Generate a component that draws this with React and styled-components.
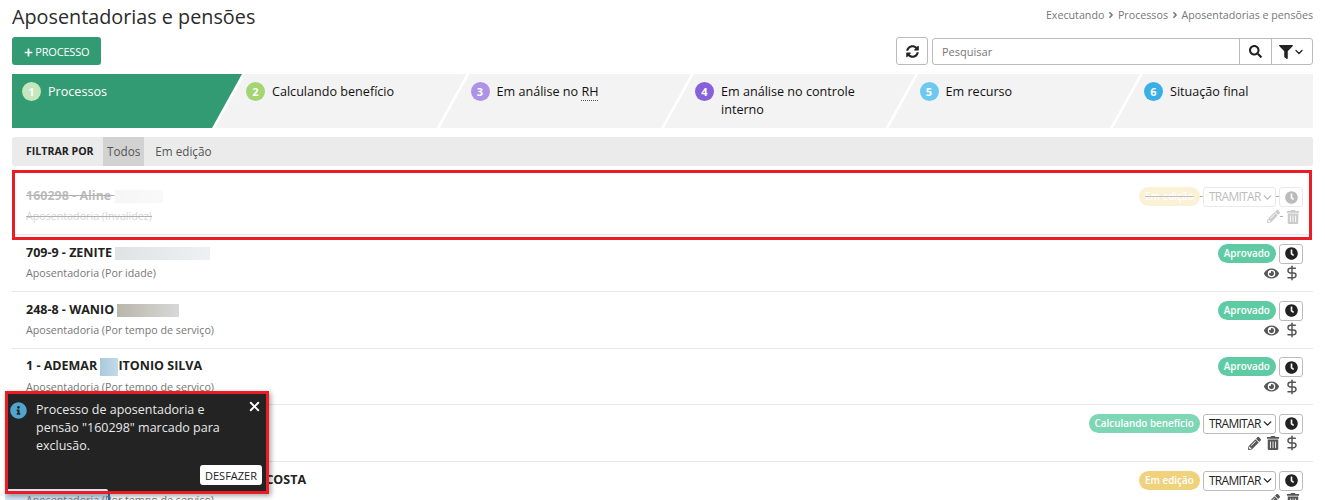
import React from 'react';
import styled, { createGlobalStyle } from "styled-components";
import { FaClock, FaEye, FaFilter, FaInfoCircle, FaPencilAlt, FaSearch, FaSyncAlt, FaTrashAlt, FaPlus, FaAngleRight } from "react-icons/fa";
import { LuChevronDown, LuDollarSign, LuX } from "react-icons/lu";

const steps = [
    { label: "Processos", color: "#c6e6bd" },
    { label: "Calculando benefício", color: "#a3d572" },
    { label: "Em análise no ", abbr: "RH", color: "#ad92e5" },
    { label: "Em análise no controle interno", color: "#8661d9" },
    { label: "Em recurso", color: "#6dc9f1" },
    { label: "Situação final", color: "#3aafe6" },
];

const rows = [
    { name: "160298 - Aline ", blur: { w: 48, h: 13, from: "#e3e3e3", to: "#eeeeee" }, sub: "Aposentadoria (Invalidez)", status: "Em edição", color: "#f0d27c", tramitar: true, icons: ["edit", "trash"], deleted: true },
    { name: "709-9 - ZENITE ", blur: { w: 95, h: 13, from: "#e0e3e4", to: "#eef0f1" }, sub: "Aposentadoria (Por idade)", status: "Aprovado", color: "#5fcba4", icons: ["eye", "money"] },
    { name: "248-8 - WANIO ", blur: { w: 62, h: 13, from: "#b9b6a9", to: "#d7d8d8" }, sub: "Aposentadoria (Por tempo de serviço)", status: "Aprovado", color: "#5fcba4", icons: ["eye", "money"] },
    { name: "1 - ADEMAR ", blur: { w: 18, h: 18, from: "#a9c9dd", to: "#c4dbe8" }, rest: "ITONIO SILVA", sub: "Aposentadoria (Por tempo de serviço)", status: "Aprovado", color: "#5fcba4", icons: ["eye", "money"] },
    { name: "82-1 - MARIA", sub: "Aposentadoria (Por idade)", status: "Calculando benefício", color: "#7dd6b4", tramitar: true, icons: ["edit", "trash", "money"] },
    { name: "315-4 - JOSE AUGUSTO DE OLIVEIRA DA COSTA", sub: "Aposentadoria (Por tempo de serviço)", status: "Em edição", color: "#f0d27c", tramitar: true, icons: ["edit", "trash"] },
];

const renderIcon = (icon) => {
    if (icon === "edit") return <ActionIcon key={icon} $w={13}><FaPencilAlt size={13} /></ActionIcon>;
    if (icon === "trash") return <ActionIcon key={icon} $w={11}><FaTrashAlt size={14} /></ActionIcon>;
    if (icon === "eye") return <ActionIcon key={icon} $w={14}><FaEye size={15} /></ActionIcon>;
    return <ActionIcon key={icon} $w={12}><LuDollarSign size={16} strokeWidth={2.2} /></ActionIcon>;
};

export default function App() {
    return (
        <Page>
            <GlobalStyle />
            <TitleBar>
                <Title>Aposentadorias e pensões</Title>
                <Breadcrumb>
                    Executando <FaAngleRight size={10} /> Processos <FaAngleRight size={10} /> Aposentadorias e pensões
                </Breadcrumb>
            </TitleBar>
            <Toolbar>
                <AddButton><FaPlus size={9} /> PROCESSO</AddButton>
                <SearchArea>
                    <RefreshButton><FaSyncAlt size={13} /></RefreshButton>
                    <SearchBox>
                        <SearchInput placeholder="Pesquisar" />
                        <SearchAddon $w={32}><FaSearch size={13} /></SearchAddon>
                        <SearchAddon $w={41}><FaFilter size={14} /><LuChevronDown size={12} strokeWidth={2.5} /></SearchAddon>
                    </SearchBox>
                </SearchArea>
            </Toolbar>
            <Stepper>
                {steps.map((step, index) => (
                    <Step key={index} $active={index === 0} $first={index === 0} $last={index === steps.length - 1}>
                        <StepNumber $color={step.color}>{index + 1}</StepNumber>
                        <StepLabel>{step.label}{step.abbr && <Abbr>{step.abbr}</Abbr>}</StepLabel>
                    </Step>
                ))}
            </Stepper>
            <FilterBar>
                <FilterTitle>FILTRAR POR</FilterTitle>
                <FilterOption $active>Todos</FilterOption>
                <FilterOption>Em edição</FilterOption>
            </FilterBar>
            <HiddenStrip />
            <List>
                {rows.map((row, index) => (
                    <RowWrap key={index} $marked={row.deleted}>
                        <Row $deleted={row.deleted}>
                            <div>
                                <Name>
                                    {row.name}
                                    {row.blur && <Blur $w={row.blur.w} $h={row.blur.h} $from={row.blur.from} $to={row.blur.to} />}
                                    {row.rest}
                                </Name>
                                <Sub>{row.sub}</Sub>
                            </div>
                            <Actions>
                                <ActionLine>
                                    <Badge $color={row.color} $deleted={row.deleted}>{row.status}</Badge>{" "}
                                    {row.tramitar && <><Tramitar>TRAMITAR<LuChevronDown size={13} strokeWidth={2.5} /></Tramitar>{" "}</>}
                                    <ClockButton><FaClock size={13} /></ClockButton>
                                </ActionLine>
                                <IconRow>
                                    {row.icons.map((icon, i) => (
                                        <React.Fragment key={icon}>{i > 0 && " "}{renderIcon(icon)}</React.Fragment>
                                    ))}
                                </IconRow>
                            </Actions>
                        </Row>
                    </RowWrap>
                ))}
            </List>
            <Toast>
                <ToastBody>
                    <ToastInfo><FaInfoCircle size={17} /></ToastInfo>
                    <ToastText>Processo de aposentadoria e pensão "160298" marcado para exclusão.</ToastText>
                    <ToastClose><LuX size={15} strokeWidth={3} /></ToastClose>
                </ToastBody>
                <ToastFooter>
                    <UndoButton>DESFAZER</UndoButton>
                </ToastFooter>
                <ToastEdge />
            </Toast>
        </Page>
    );
}

const GlobalStyle = createGlobalStyle`
    html, body {
        margin: 0;
        height: 500px;
        overflow: hidden;
        background: #fff;
        font-family: "Open Sans", "Liberation Sans", sans-serif;
    }
`;

const Page = styled.div`
    position: relative;
    height: 500px;
    overflow: hidden;
    padding: 0 12px;
    box-sizing: border-box;
`;

const TitleBar = styled.div`
    display: flex;
    justify-content: space-between;
    height: 37px;
`;

const Title = styled.h1`
    margin: 3px 0 0;
    font-size: 19.8px;
    line-height: 28px;
    font-weight: 400;
    color: #2b2b2b;
`;

const Breadcrumb = styled.div`
    margin-top: 8px;
    font-size: 10.7px;
    line-height: 15px;
    color: #777;
    svg {
        vertical-align: -1px;
        margin: 0 -1px;
    }
`;

const Toolbar = styled.div`
    display: flex;
    justify-content: space-between;
    height: 28px;
`;

const AddButton = styled.button`
    width: 89px;
    height: 28px;
    padding: 0;
    border: 0;
    border-radius: 3px;
    background: #339b73;
    color: #fff;
    font: 400 11px "Open Sans", sans-serif;
    letter-spacing: -0.2px;
    svg {
        vertical-align: -1px;
    }
`;

const SearchArea = styled.div`
    display: flex;
    gap: 4px;
`;

const RefreshButton = styled.button`
    width: 32px;
    height: 28px;
    padding: 0;
    border: 1px solid #bbb;
    border-radius: 3px;
    background: #fff;
    color: #222;
    display: flex;
    align-items: center;
    justify-content: center;
`;

const SearchBox = styled.div`
    display: flex;
    width: 381px;
    height: 27px;
    margin-top: 1px;
    box-sizing: border-box;
    border: 1px solid #bbb;
    border-radius: 3px;
`;

const SearchInput = styled.input`
    flex: 1;
    min-width: 0;
    border: 0;
    outline: 0;
    padding: 0 9px;
    background: transparent;
    font: 400 11px "Open Sans", sans-serif;
    &::placeholder {
        color: #777;
        opacity: 1;
    }
`;

const SearchAddon = styled.div`
    width: ${(p) => p.$w}px;
    box-sizing: border-box;
    border-left: 1px solid #bbb;
    display: flex;
    align-items: center;
    justify-content: center;
    color: #222;
`;

const Stepper = styled.div`
    display: flex;
    height: 54px;
    margin-top: 9px;
`;

const Step = styled.div`
    flex: ${(p) => (p.$first ? "0 0 230px" : p.$last ? "1" : "0 0 251.5px")};
    margin-left: ${(p) => (p.$first ? 0 : -27)}px;
    box-sizing: border-box;
    padding: 8px 18px 0 ${(p) => (p.$first ? 10 : 31)}px;
    display: flex;
    gap: 7px;
    background: ${(p) => (p.$active ? "#339b73" : "#f3f3f3")};
    color: ${(p) => (p.$active ? "#fff" : "#111")};
    clip-path: ${(p) =>
        p.$first
            ? "polygon(0 0, 100% 0, calc(100% - 30px) 100%, 0 100%)"
            : p.$last
            ? "polygon(30px 0, 100% 0, 100% 100%, 0 100%)"
            : "polygon(30px 0, 100% 0, calc(100% - 30px) 100%, 0 100%)"};
`;

const StepNumber = styled.span`
    flex: none;
    width: 19px;
    height: 19px;
    border-radius: 50%;
    background: ${(p) => p.$color};
    color: #fff;
    font-size: 11px;
    font-weight: 700;
    line-height: 19px;
    text-align: center;
`;

const StepLabel = styled.span`
    margin-top: 1px;
    font-size: 12.6px;
    line-height: 18px;
`;

const Abbr = styled.span`
    border-bottom: 1px dotted #555;
`;

const FilterBar = styled.div`
    display: flex;
    align-items: stretch;
    height: 29px;
    margin-top: 9px;
    padding-left: 14px;
    border-radius: 3px;
    background: #ebebeb;
`;

const FilterTitle = styled.span`
    margin-right: 9.5px;
    font-size: 10.6px;
    font-weight: 700;
    line-height: 28px;
    color: #222;
`;

const FilterOption = styled.span`
    padding: 0 4px;
    margin-right: 7px;
    background: ${(p) => (p.$active ? "#d2d2d2" : "transparent")};
    font-size: 11.7px;
    line-height: 29px;
    color: #555;
`;

const List = styled.div`
    margin-top: 12.8px;
`;

const RowWrap = styled.div`
    position: relative;
    height: 56.65px;
    box-sizing: border-box;
    border-bottom: 1px solid #e8e8e8;
    ${(p) =>
        p.$marked &&
        `&::after {
            content: "";
            position: absolute;
            left: 0;
            right: 1px;
            top: -9px;
            bottom: -6px;
            border: 3px solid #ed1c24;
        }`}
`;

const Row = styled.div`
    display: flex;
    justify-content: space-between;
    padding: 8.5px 10px 0 14px;
    opacity: ${(p) => (p.$deleted ? 0.3 : 1)};
    text-decoration: ${(p) => (p.$deleted ? "line-through" : "none")};
`;

const Name = styled.div`
    font-size: 12.5px;
    font-weight: 700;
    line-height: 18px;
    color: #222;
`;

const Blur = styled.span`
    display: inline-block;
    width: ${(p) => p.$w}px;
    height: ${(p) => p.$h}px;
    vertical-align: middle;
    background: linear-gradient(90deg, ${(p) => p.$from}, ${(p) => p.$to});
`;

const Sub = styled.div`
    margin-top: 4px;
    font-size: 10.7px;
    line-height: 15px;
    color: #777;
`;

const Actions = styled.div`
    text-align: right;
    font-size: 12px;
    line-height: 20px;
`;

const ActionLine = styled.div`
    height: 20px;
`;

const Badge = styled.span`
    display: inline-block;
    height: 19px;
    padding: 0 6px;
    border-radius: 10px;
    background: ${(p) => p.$color};
    color: #fff;
    font-size: 9.9px;
    font-weight: 600;
    line-height: 18px;
    text-decoration: ${(p) => (p.$deleted ? "line-through #333" : "none")};
    vertical-align: top;
`;

const Tramitar = styled.span`
    display: inline-flex;
    align-items: center;
    justify-content: space-between;
    width: 73px;
    height: 20px;
    padding: 0 1px 0 5px;
    box-sizing: border-box;
    border: 1px solid #bbb;
    border-radius: 3px;
    color: #222;
    font-size: 12px;
    letter-spacing: -0.7px;
    vertical-align: top;
    svg {
        flex: none;
    }
`;

const ClockButton = styled.span`
    display: inline-flex;
    align-items: center;
    justify-content: center;
    width: 24px;
    height: 20px;
    box-sizing: border-box;
    border: 1px solid #bbb;
    border-radius: 3px;
    color: #222;
    vertical-align: top;
`;

const IconRow = styled.div`
    height: 16px;
    padding: 2px 5px 0 0;
    line-height: 15px;
`;

const ActionIcon = styled.span`
    display: inline-flex;
    justify-content: center;
    width: ${(p) => p.$w}px;
    height: 15px;
    align-items: center;
    margin-left: 4px;
    color: #555;
    vertical-align: top;
    svg {
        flex: none;
    }
`;

const HiddenStrip = styled.div`
    position: absolute;
    left: 5px;
    top: 490px;
    width: 105px;
    height: 10px;
    background: #d3e3f3;
    border-right: 2px solid #2f6fb0;
    box-sizing: border-box;
`;

const Toast = styled.div`
    position: absolute;
    left: 5px;
    top: 391px;
    width: 264px;
    height: 103px;
    box-sizing: border-box;
    border: 3px solid #ed1c24;
    background: #232323;
    box-shadow: 2px 2px 5px rgba(0, 0, 0, 0.35);
    color: #e8e8e8;
    display: flex;
    flex-direction: column;
    justify-content: space-between;
    padding: 7px 4px 6px 2px;
`;

const ToastEdge = styled.div`
    position: absolute;
    left: 0;
    bottom: 0;
    width: 100px;
    height: 2px;
    background: #d8e4f5;
    border-top-right-radius: 3px;
`;

const ToastBody = styled.div`
    display: flex;
    align-items: flex-start;
`;

const ToastInfo = styled.span`
    flex: none;
    width: 17px;
    height: 17px;
    margin-top: 1px;
    color: #4ea5d0;
`;

const ToastText = styled.div`
    flex: 1;
    padding: 0 20px 0 9px;
    font-size: 12.5px;
    line-height: 18px;
`;

const ToastClose = styled.span`
    flex: none;
    color: #fff;
    line-height: 15px;
    height: 15px;
    margin: -2px 0 0;
`;

const ToastFooter = styled.div`
    display: flex;
    justify-content: flex-end;
`;

const UndoButton = styled.button`
    width: 62px;
    height: 20px;
    padding: 0;
    border: 0;
    border-radius: 3px;
    background: #fff;
    color: #222;
    font: 400 11px "Open Sans", sans-serif;
`;
